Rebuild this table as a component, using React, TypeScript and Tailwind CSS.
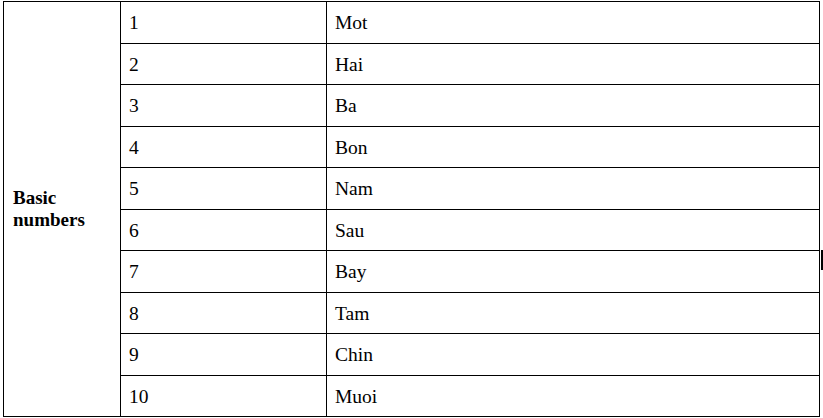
const rows = [
  { num: "1", word: "Mot" },
  { num: "2", word: "Hai" },
  { num: "3", word: "Ba" },
  { num: "4", word: "Bon" },
  { num: "5", word: "Nam" },
  { num: "6", word: "Sau" },
  { num: "7", word: "Bay" },
  { num: "8", word: "Tam" },
  { num: "9", word: "Chin" },
  { num: "10", word: "Muoi" },
];

export default function App() {
  return (
    <div
      className="relative w-[823px] h-[418px] bg-white overflow-hidden text-black"
      style={{ fontFamily: '"Liberation Serif", "Times New Roman", serif' }}
    >
      <div className="ml-[3px] mt-[1px] w-[817px] grid grid-cols-[116px_205px_492px] grid-rows-[41px_40px_41px_40px_41px_40px_41px_40px_41px_40px] gap-px p-px bg-black text-[19.5px] leading-[22px]">
        {/* Category cell spanning every row */}
        <div className="row-span-10 col-start-1 row-start-1 bg-white flex items-center pl-[9px] font-bold text-[19px]">
          <span>
            Basic
            <br />
            numbers
          </span>
        </div>
        {rows.map((r, i) => (
          <div key={r.num} className="contents">
            <div
              className="col-start-2 bg-white flex items-center pl-2 pt-px"
              style={{ gridRowStart: i + 1 }}
            >
              {r.num}
            </div>
            <div
              className="col-start-3 bg-white flex items-center pl-2 pt-px"
              style={{ gridRowStart: i + 1 }}
            >
              {r.word}
            </div>
          </div>
        ))}
      </div>
      {/* stray caret mark at the right edge */}
      <div className="absolute left-[821px] top-[250px] w-[2px] h-[20px] bg-black" />
    </div>
  );
}
